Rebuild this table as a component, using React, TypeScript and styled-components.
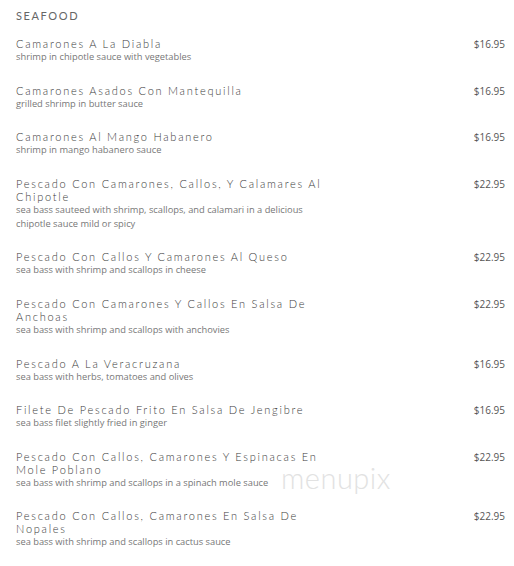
import React from 'react';
import styled, { createGlobalStyle } from 'styled-components';

interface MenuItem {
  name: string;
  description: string;
  price: string;
}

const items: MenuItem[] = [
  { name: 'Camarones A La Diabla', description: 'shrimp in chipotle sauce with vegetables', price: '$16.95' },
  { name: 'Camarones Asados Con Mantequilla', description: 'grilled shrimp in butter sauce', price: '$16.95' },
  { name: 'Camarones Al Mango Habanero', description: 'shrimp in mango habanero sauce', price: '$16.95' },
  {
    name: 'Pescado Con Camarones, Callos, Y Calamares Al Chipotle',
    description: 'sea bass sauteed with shrimp, scallops, and calamari in a delicious chipotle sauce mild or spicy',
    price: '$22.95',
  },
  { name: 'Pescado Con Callos Y Camarones Al Queso', description: 'sea bass with shrimp and scallops in cheese', price: '$22.95' },
  {
    name: 'Pescado Con Camarones Y Callos En Salsa De Anchoas',
    description: 'sea bass with shrimp and scallops with anchovies',
    price: '$22.95',
  },
  { name: 'Pescado A La Veracruzana', description: 'sea bass with herbs, tomatoes and olives', price: '$16.95' },
  { name: 'Filete De Pescado Frito En Salsa De Jengibre', description: 'sea bass filet slightly fried in ginger', price: '$16.95' },
  {
    name: 'Pescado Con Callos, Camarones Y Espinacas En Mole Poblano',
    description: 'sea bass with shrimp and scallops in a spinach mole sauce',
    price: '$22.95',
  },
  {
    name: 'Pescado Con Callos, Camarones En Salsa De Nopales',
    description: 'sea bass with shrimp and scallops in cactus sauce',
    price: '$22.95',
  },
];

const GlobalStyle = createGlobalStyle`
  html, body {
    margin: 0;
    padding: 0;
    background: #fff;
  }
`;

const Page = styled.div`
  position: relative;
  width: 514px;
  height: 566px;
  padding: 9px 9px 0 16px;
  box-sizing: border-box;
  overflow: hidden;
  font-family: 'Open Sans', sans-serif;
`;

const SectionTitle = styled.h2`
  margin: 0 0 14px;
  font-family: Lato, sans-serif;
  font-size: 11px;
  font-weight: 400;
  line-height: 14px;
  letter-spacing: 1.6px;
  color: #666;
`;

const List = styled.div`
  display: flex;
  flex-direction: column;
  gap: 19.6px;
`;

const Row = styled.div`
  display: flex;
  justify-content: space-between;
  align-items: flex-start;
`;

const Info = styled.div`
  width: 320px;
  display: flex;
  flex-direction: column;
  align-items: flex-start;
`;

const Name = styled.div`
  font-family: Lato, sans-serif;
  font-size: 11px;
  font-weight: 300;
  line-height: 13px;
  letter-spacing: 1.75px;
  color: #3a3a3a;
`;

const Description = styled.div`
  font-size: 9.3px;
  line-height: 14px;
  color: #777;
`;

const Price = styled.div`
  padding-top: 1px;
  font-size: 10px;
  line-height: 13px;
  color: #555;
`;

const Watermark = styled.div`
  position: absolute;
  left: 281px;
  top: 471px;
  font-family: Lato, sans-serif;
  font-weight: 300;
  font-size: 29px;
  line-height: 14px;
  letter-spacing: 0.5px;
  color: #e2e2e2;
  pointer-events: none;
`;

export default function App() {
  return (
    <>
      <GlobalStyle />
      <Page>
        <SectionTitle>SEAFOOD</SectionTitle>
        <List>
          {items.map((item) => (
            <Row key={item.name}>
              <Info>
                <Name>{item.name}</Name>
                <Description>{item.description}</Description>
              </Info>
              <Price>{item.price}</Price>
            </Row>
          ))}
        </List>
        <Watermark>menupix</Watermark>
      </Page>
    </>
  );
}
